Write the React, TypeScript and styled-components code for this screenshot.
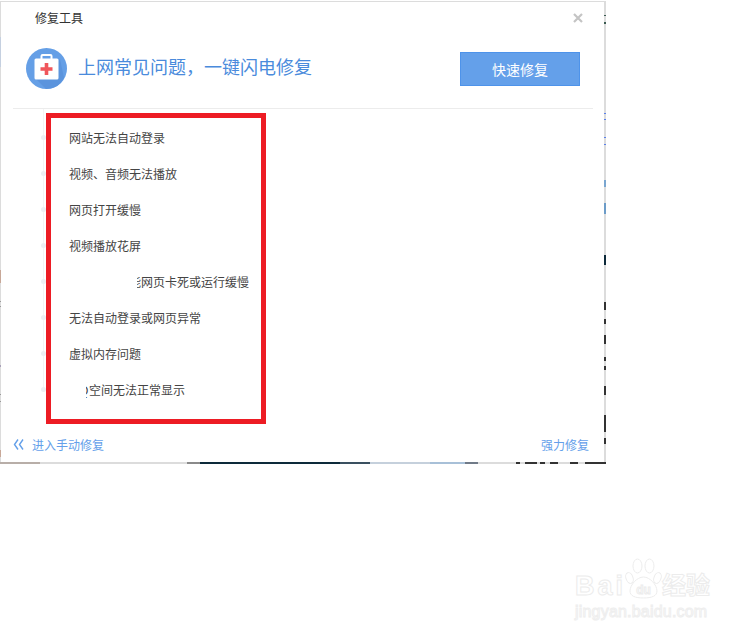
import React from "react";
import styled, { createGlobalStyle } from "styled-components";

const GlobalStyle = createGlobalStyle`
  html, body {
    margin: 0;
    padding: 0;
    background: #fff;
  }
  body {
    width: 750px;
    height: 639px;
    overflow: hidden;
    font-family: "Liberation Sans", "Noto Sans CJK SC", sans-serif;
  }
`;

const Page = styled.div`
  position: relative;
  width: 750px;
  height: 639px;
  padding-top: 1px;
  box-sizing: border-box;
`;

const Dialog = styled.div`
  position: relative;
  width: 606px;
  height: 463px;
  box-sizing: border-box;
  border: 1px solid #dcdcdc;
  border-width: 1px 2px 2px 1px;
  background: #fff;
  display: flex;
  flex-direction: column;
`;

const TitleBar = styled.div`
  display: flex;
  justify-content: space-between;
  align-items: center;
  height: 30px;
  padding: 0 21px 2px 34px;
  font-size: 12px;
  color: #333;
`;

const CloseIcon = styled.svg`
  width: 10px;
  height: 10px;
  display: block;
  margin-top: 2px;
`;

const Banner = styled.div`
  display: flex;
  align-items: center;
  height: 68px;
  margin: 0 11px 0 12px;
  padding: 0 13px 6px 13px;
  border-bottom: 1px solid #ececec;
`;

const Headline = styled.div`
  flex: 1;
  margin: 0 0 4px 11px;
  font-size: 18px;
  color: #4a8bdc;
`;

const FixButton = styled.button`
  width: 120px;
  height: 34px;
  margin-top: 2px;
  border: 1px solid #4e93ea;
  border-radius: 0;
  background: #64a0ea;
  color: #fff;
  font: inherit;
  font-size: 14px;
  padding: 0;
`;

const List = styled.ul`
  position: relative;
  list-style: none;
  flex: 1;
  margin: 0;
  padding: 10px 0 0 40px;

  /* faint line that joins the dots */
  &::before {
    content: "";
    position: absolute;
    left: 42px;
    top: 0;
    height: 280px;
    width: 1px;
    background: #f4f4f4;
  }
`;

const Item = styled.li`
  position: relative;
  display: flex;
  align-items: center;
  height: 36px;
  font-size: 12px;
  color: #444;
`;

const Dot = styled.span`
  width: 5px;
  height: 5px;
  margin-right: 23px;
  border-radius: 50%;
  background: #eceff3;
`;

const Label = styled.span`
  position: relative;
`;

const Prefix = styled.span`
  letter-spacing: 0.7px;
`;

const Mask = styled.span<{ $width: number }>`
  position: absolute;
  left: 0;
  top: 0;
  bottom: 0;
  width: ${(p) => p.$width}px;
  background: #fff;
`;

const Footer = styled.div`
  display: flex;
  justify-content: space-between;
  align-items: center;
  height: 30px;
  padding: 0 15px 6px 12px;
  font-size: 12px;
  color: #64a0ea;
  box-sizing: border-box;
`;

const BackLink = styled.span`
  display: flex;
  align-items: center;
  gap: 8px;
`;

const RedFrame = styled.div`
  position: absolute;
  left: 46px;
  top: 113px;
  width: 220px;
  height: 311px;
  box-sizing: border-box;
  border: 5px solid #ed1c24;
  pointer-events: none;
`;

/* bits of the page behind the dialog that show through its border */
const BottomPeek = styled.div`
  position: absolute;
  left: 0;
  top: 462px;
  width: 606px;
  height: 2px;
  background: linear-gradient(
    90deg,
    #b8aea8 0 40px,
    #dcdcdc 40px 187px,
    #8a8a8a 187px 200px,
    #0d2a3a 200px 340px,
    #3a5060 340px 370px,
    #c5d0dc 370px 430px,
    #a8c0d8 430px 465px,
    #707a88 465px 478px,
    #dcdcdc 478px 516px,
    #333 516px 520px,
    #dcdcdc 520px 525px,
    #333 525px 537px,
    #dcdcdc 537px 540px,
    #333 540px 545px,
    #dcdcdc 545px 550px,
    #333 550px 558px,
    #dcdcdc 558px 570px,
    #333 570px 578px,
    #dcdcdc 578px 585px,
    #333 585px 606px
  );
`;

const RightPeek = styled.div`
  position: absolute;
  left: 604px;
  top: 0;
  width: 2px;
  height: 462px;
  background: linear-gradient(
    180deg,
    transparent 0 15px,
    #3a5a50 15px 16px,
    transparent 16px 22px,
    #3a5a50 22px 24px,
    transparent 24px 113px,
    #5a80ea 113px 114px,
    transparent 114px 119px,
    #5a80ea 119px 120px,
    transparent 120px 137px,
    #5a80ea 137px 138px,
    transparent 138px 144px,
    #5a80ea 144px 145px,
    transparent 145px 180px,
    #7aa6d0 180px 187px,
    transparent 187px 203px,
    #6c9cc8 203px 214px,
    transparent 214px 255px,
    #0d2a3a 255px 265px,
    transparent 265px 302px,
    #333 302px 310px,
    transparent 310px 319px,
    #333 319px 324px,
    transparent 324px 335px,
    #333 335px 344px,
    transparent 344px 357px,
    #333 357px 361px,
    transparent 361px 366px,
    #333 366px 370px,
    transparent 370px 386px,
    #333 386px 395px,
    transparent 395px 415px,
    #333 415px 432px,
    transparent 432px 438px,
    #333 438px 444px,
    transparent 444px
  );
`;

const LeftPeek = styled.div`
  position: absolute;
  left: 0;
  top: 0;
  width: 1px;
  height: 462px;
  background: linear-gradient(
    180deg,
    transparent 0 37px,
    #c5d0e0 37px 67px,
    transparent 67px 270px,
    #c8a898 270px 283px,
    transparent 283px 301px,
    #999 301px 302px,
    transparent 302px 306px,
    #999 306px 307px,
    transparent 307px 365px,
    #a8a0b8 365px 367px,
    transparent 367px 394px,
    #999 394px 395px,
    transparent 395px 401px,
    #999 401px 402px,
    transparent 402px 450px,
    #c8a898 450px 457px,
    transparent 457px
  );
`;

const Watermark = styled.div`
  position: absolute;
  left: 575px;
  top: 558px;
  width: 135px;
`;

const WatermarkTop = styled.div`
  display: flex;
  align-items: flex-end;
  height: 42px;
`;

const WatermarkBai = styled.span`
  font-size: 27px;
  font-weight: 700;
  letter-spacing: 3px;
  line-height: 28px;
  margin-right: -1px;
  color: #fff;
  -webkit-text-stroke: 1px #ececec;
`;

const WatermarkJy = styled.span`
  font-size: 24px;
  font-weight: 700;
  line-height: 28px;
  white-space: nowrap;
  color: #fff;
  -webkit-text-stroke: 1px #ececec;
`;

const WatermarkUrl = styled.div`
  margin-top: 3px;
  font-size: 16px;
  letter-spacing: 0.2px;
  line-height: 18px;
  white-space: nowrap;
  color: #fff;
  -webkit-text-stroke: 1px #eeeeee;
`;

const items: { text: string; prefix?: string; mask?: number }[] = [
  { text: "网站无法自动登录" },
  { text: "视频、音频无法播放" },
  { text: "网页打开缓慢" },
  { text: "视频播放花屏" },
  { text: "打开部分功能网页卡死或运行缓慢", mask: 68 },
  { text: "无法自动登录或网页异常" },
  { text: "虚拟内存问题" },
  { text: "空间无法正常显示", prefix: "QQ", mask: 17 },
];

function KitIcon() {
  return (
    <svg width="41" height="41" viewBox="0 0 41 41">
      <circle cx="20.5" cy="20.5" r="20.5" fill="#659fe6" />
      <path d="M34 11L38 30 A20.5 20.5 0 0 1 20 41 L10 31z" fill="#5b94dd" />
      <path d="M14.500 11V8a2 2 0 0 1 2-2h8a2 2 0 0 1 2 2v3h-2V8h-8v3z" fill="#fff" />
      <rect x="8.500" y="10.500" width="24" height="21" rx="1.500" fill="#fff" />
      <path d="M18.700 15h3.600v4.200h4.200v3.600h-4.200V27h-3.600v-4.200h-4.200v-3.600h4.200z" fill="#f0565b" />
    </svg>
  );
}

function PawMark() {
  return (
    <svg width="37" height="42" viewBox="0 0 37 42" fill="#fff" stroke="#ececec" strokeWidth="1">
      <ellipse cx="4.500" cy="20" rx="3.500" ry="5.500" transform="rotate(-20 4.500 20)" />
      <ellipse cx="12.500" cy="8" rx="4.500" ry="7" />
      <ellipse cx="24.500" cy="8" rx="4.500" ry="7" />
      <ellipse cx="32.500" cy="20" rx="3.500" ry="5.500" transform="rotate(20 32.500 20)" />
      <path d="M18.500 19C12 19 5 27 5 33c0 5 5 7 13.500 7S32 38 32 33c0-6-7-14-13.500-14z" />
      <text x="18.500" y="36" textAnchor="middle" fontSize="12" fontWeight="700" fontFamily="Liberation Sans" fill="#fff">du</text>
    </svg>
  );
}

export default function App(): React.ReactElement {
  return (
    <>
      <GlobalStyle />
      <Page>
        <Dialog>
          <TitleBar>
            <span>修复工具</span>
            <CloseIcon viewBox="0 0 10 10">
              <path d="M1 1l8 8M9 1l-8 8" stroke="#c4c4c4" strokeWidth="2.2" />
            </CloseIcon>
          </TitleBar>
          <Banner>
            <KitIcon />
            <Headline>上网常见问题，一键闪电修复</Headline>
            <FixButton>快速修复</FixButton>
          </Banner>
          <List>
            {items.map((item) => (
              <Item key={item.text}>
                <Dot />
                <Label>
                  {item.prefix ? <Prefix>{item.prefix}</Prefix> : null}
                  {item.text}
                  {item.mask ? <Mask $width={item.mask} /> : null}
                </Label>
              </Item>
            ))}
          </List>
          <Footer>
            <BackLink>
              <svg width="11" height="11" viewBox="0 0 11 11">
                <path d="M5 .5L1.500 5.500l3.500 5M10 .5L6.500 5.500l3.500 5" fill="none" stroke="#64a0ea" strokeWidth="1.400" />
              </svg>
              进入手动修复
            </BackLink>
            <span>强力修复</span>
          </Footer>
        </Dialog>
        <BottomPeek />
        <RightPeek />
        <LeftPeek />
        <RedFrame />
        <Watermark>
          <WatermarkTop>
            <WatermarkBai>Bai</WatermarkBai>
            <PawMark />
            <WatermarkJy>经验</WatermarkJy>
          </WatermarkTop>
          <WatermarkUrl>jingyan.baidu.com</WatermarkUrl>
        </Watermark>
      </Page>
    </>
  );
}
